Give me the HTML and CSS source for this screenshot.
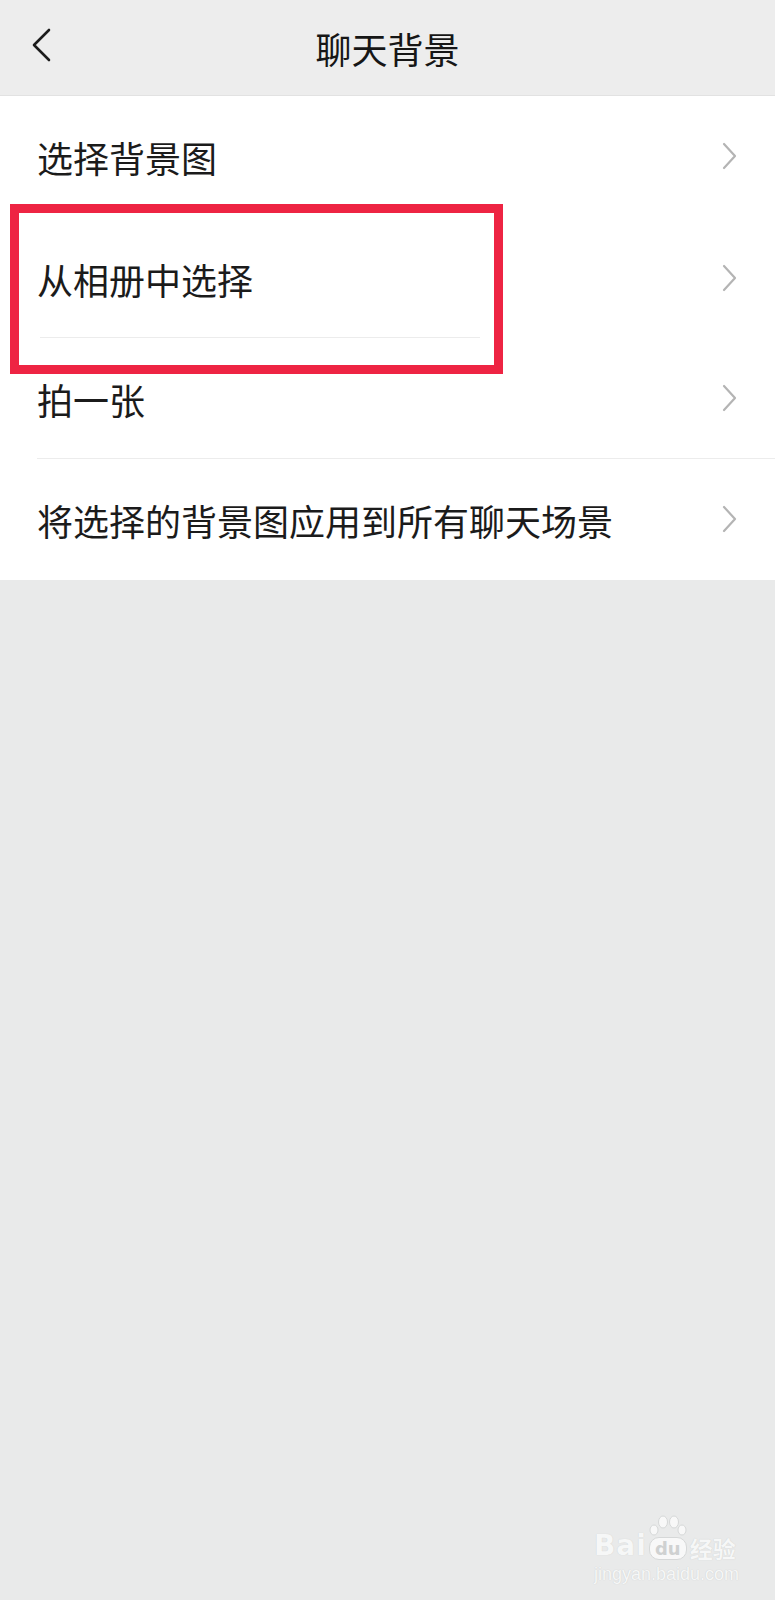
FILE: index.html
```html
<!DOCTYPE html>
<html lang="zh-CN">
<head>
<meta charset="utf-8">
<title>聊天背景</title>
<link rel="stylesheet" href="styles.css">
</head>
<body>
<div class="page">
  <header class="topbar">
    <svg class="back" width="24" height="36" viewBox="0 0 24 36"><path d="M20 3 L5 18 L20 33" fill="none" stroke="#1c1c1c" stroke-width="2.6" stroke-linecap="round" stroke-linejoin="round"/></svg>
    <h1 class="title">聊天背景</h1>
  </header>
  <ul class="list">
    <li class="row"><div class="row-body no-line"><span class="label">选择背景图</span><svg class="chev" width="16" height="28" viewBox="0 0 16 28"><path d="M3 2 L14 14 L3 26" fill="none" stroke="#b4b4b4" stroke-width="2.2" stroke-linecap="round" stroke-linejoin="round"/></svg></div></li>
    <li class="row"><div class="row-body short-line"><span class="label">从相册中选择</span><svg class="chev" width="16" height="28" viewBox="0 0 16 28"><path d="M3 2 L14 14 L3 26" fill="none" stroke="#b4b4b4" stroke-width="2.2" stroke-linecap="round" stroke-linejoin="round"/></svg></div></li>
    <li class="row"><div class="row-body"><span class="label">拍一张</span><svg class="chev" width="16" height="28" viewBox="0 0 16 28"><path d="M3 2 L14 14 L3 26" fill="none" stroke="#b4b4b4" stroke-width="2.2" stroke-linecap="round" stroke-linejoin="round"/></svg></div></li>
    <li class="row"><div class="row-body no-line"><span class="label">将选择的背景图应用到所有聊天场景</span><svg class="chev" width="16" height="28" viewBox="0 0 16 28"><path d="M3 2 L14 14 L3 26" fill="none" stroke="#b4b4b4" stroke-width="2.2" stroke-linecap="round" stroke-linejoin="round"/></svg></div></li>
  </ul>
  <div class="highlight"></div>
  <div class="watermark">
    <div class="wm-top">
      <span class="wm-bai">Bai</span>
      <span class="wm-du">
        <svg class="paw" width="40" height="22" viewBox="0 0 40 22"><ellipse cx="6" cy="15" rx="4" ry="5" fill="#f8f8f8" stroke="#d6d8d8"/><ellipse cx="15" cy="7" rx="4.5" ry="6" fill="#f8f8f8" stroke="#d6d8d8"/><ellipse cx="26" cy="7" rx="4.5" ry="6" fill="#f8f8f8" stroke="#d6d8d8"/><ellipse cx="34" cy="15" rx="4" ry="5" fill="#f8f8f8" stroke="#d6d8d8"/></svg>
        <span class="du">du</span>
      </span>
      <span class="wm-jy">经验</span>
    </div>
    <div class="wm-url">jingyan.baidu.com</div>
  </div>
</div>
</body>
</html>
```
FILE: styles.css
```css
* { box-sizing: border-box; }
html, body { margin: 0; padding: 0; }
body {
  background: #e9eaea;
  font-family: "Noto Sans CJK SC", "Noto Sans", sans-serif;
  color: #1b1b1b;
}
.page {
  position: relative;
  width: 775px;
  height: 1600px;
  overflow: hidden;
}
.topbar {
  height: 96px;
  background: #ededed;
  border-bottom: 1px solid #e2e2e2;
  display: flex;
  align-items: center;
  justify-content: center;
  position: relative;
}
.back {
  position: absolute;
  left: 29px;
  top: 27px;
}
.title {
  margin: 0;
  font-size: 36px;
  font-weight: 400;
  color: #161616;
  line-height: 1;
}
.list {
  list-style: none;
  margin: 0;
  padding: 0;
  background: #ffffff;
}
.row {
  padding-left: 37px;
}
.row-body {
  height: 121px;
  display: flex;
  align-items: center;
  justify-content: space-between;
  padding-right: 38px;
  border-bottom: 1px solid #ececec;
}
.row-body.no-line { border-bottom-color: transparent; }
.row-body.short-line {
  border-bottom: none;
  background: linear-gradient(#ececec, #ececec) 3px 100% / 440px 1px no-repeat;
}
.label {
  font-size: 36px;
  line-height: 1;
  color: #1b1b1b;
  padding-top: 2px;
}
.chev { display: block; }
.highlight {
  position: absolute;
  left: 10px;
  top: 204px;
  width: 493px;
  height: 170px;
  border: 9px solid #ee2443;
}
.watermark {
  position: absolute;
  left: 594px;
  top: 1515px;
  display: flex;
  flex-direction: column;
  align-items: flex-start;
  color: #f6f7f7;
  font-family: "DejaVu Sans", sans-serif;
}
.wm-top {
  display: flex;
  align-items: flex-end;
}
.wm-bai {
  font-size: 28px;
  font-weight: 700;
  line-height: 1;
  letter-spacing: 1px;
  text-shadow: 0 0 1px #c9cbcb;
}
.wm-du {
  display: flex;
  flex-direction: column;
  align-items: center;
  margin-left: 1px;
}
.paw { display: block; }
.du {
  display: block;
  font-size: 18px;
  font-weight: 700;
  line-height: 21px;
  padding: 0 5px;
  background: #f8f8f8;
  color: #cfd1d1;
  border-radius: 10px;
  border: 1px solid #d6d8d8;
}
.wm-jy {
  font-family: "Noto Sans CJK SC", sans-serif;
  font-size: 23px;
  font-weight: 700;
  line-height: 1;
  margin-left: 2px;
  text-shadow: 0 0 1px #c4c6c6;
}
.wm-url {
  font-family: "Liberation Sans", sans-serif;
  font-size: 18px;
  line-height: 1;
  margin-top: 5px;
  text-shadow: 0 0 1px #c4c6c6;
}
```
